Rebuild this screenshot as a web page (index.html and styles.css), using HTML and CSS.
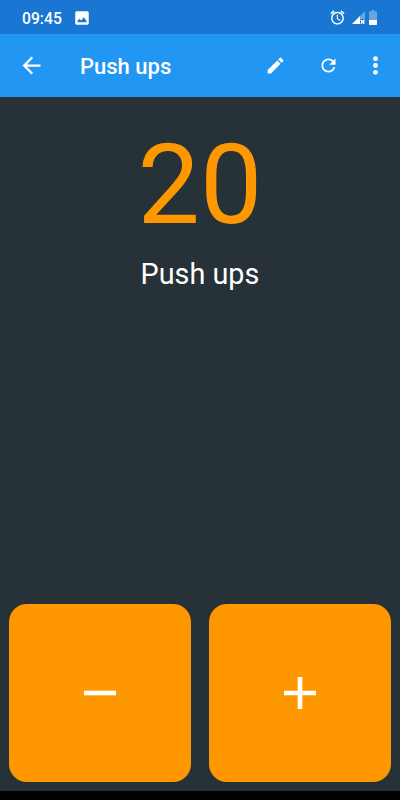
FILE: index.html
```
<!DOCTYPE html>
<html lang="en">

<head>
    <meta charset="UTF-8">
    <meta name="viewport" content="width=device-width, initial-scale=1.0">
    <title>Push ups</title>
    <link rel="stylesheet" href="styles.css">
</head>

<body>
    <div id="app">
        <div class="status-bar">
            <span class="clock">09:45</span>
            <svg class="picture-icon" viewBox="0 0 24 24"><path d="M21 19V5c0-1.100-.9-2-2-2H5c-1.100 0-2 .9-2 2v14c0 1.100.9 2 2 2h14c1.100 0 2-.9 2-2zM6 17.500v-2l2.700-2.500 2.300 2.300 3.300-4.300L18 15.500v2z"/></svg>
            <div class="status-icons">
                <svg class="alarm-icon" viewBox="0 0 24 24"><path d="M22 5.720l-4.600-3.860-1.290 1.530 4.600 3.860L22 5.720zM7.880 3.390L6.600 1.860 2 5.710l1.290 1.530 4.590-3.850zM12.500 8H11v6l4.750 2.850.75-1.230-4-2.370V8zM12 4c-4.970 0-9 4.030-9 9s4.020 9 9 9c4.970 0 9-4.030 9-9s-4.030-9-9-9zm0 16c-3.870 0-7-3.130-7-7s3.130-7 7-7 7 3.130 7 7-3.130 7-7 7z"/></svg>
                <svg class="signal-icon" viewBox="0 0 14 14">
                    <path opacity=".35" d="M13 0v8H8V5z"/>
                    <path d="M0 13L8 5v8z"/>
                    <path class="cross" d="M8.800 9l3.600 3.600M12.400 9L8.800 12.600"/>
                </svg>
                <svg class="battery-icon" viewBox="0 0 8 15">
                    <path opacity=".35" d="M2.500 0h3v1.500H7.300q.7 0 .7.700V10H0V2.200q0-.7.700-.7h1.800z"/>
                    <path d="M0 10h8v4.300q0 .7-.7.700H.7q-.7 0-.7-.7z"/>
                </svg>
            </div>
        </div>

        <div class="app-bar">
            <svg class="back-icon" viewBox="0 0 24 24"><path d="M20 11H7.830l5.590-5.590L12 4l-8 8 8 8 1.410-1.410L7.830 13H20v-2z"/></svg>
            <div class="title">Push ups</div>
            <svg class="edit-icon" viewBox="0 0 24 24"><path d="M3 17.250V21h3.750L17.810 9.940l-3.750-3.750L3 17.250zM20.710 7.040c.39-.39.39-1.020 0-1.410l-2.340-2.340c-.39-.39-1.020-.39-1.410 0l-1.830 1.830 3.750 3.750 1.830-1.830z"/></svg>
            <svg class="reset-icon" viewBox="0 0 24 24"><path d="M17.650 6.350C16.200 4.900 14.210 4 12 4c-4.420 0-7.990 3.580-7.990 8s3.570 8 7.990 8c3.730 0 6.840-2.550 7.730-6h-2.080c-.82 2.330-3.040 4-5.650 4-3.310 0-6-2.690-6-6s2.690-6 6-6c1.660 0 3.140.69 4.220 1.780L13 11h7V4l-2.350 2.350z"/></svg>
            <svg class="more-icon" viewBox="0 0 24 24"><circle cx="12" cy="5.900" r="2.200"/><circle cx="12" cy="12" r="2.200"/><circle cx="12" cy="18.100" r="2.200"/></svg>
        </div>

        <div class="counter">
            <div class="count">20</div>
            <div class="name">Push ups</div>
        </div>

        <div class="buttons">
            <button aria-label="Decrease">
                <svg viewBox="0 0 32 32"><path d="M0 16h32"/></svg>
            </button>
            <button aria-label="Increase">
                <svg viewBox="0 0 32 32"><path d="M0 16h32M16 0v32"/></svg>
            </button>
        </div>

        <div class="nav-bar"></div>
    </div>
</body>

</html>
```

FILE: styles.css
```
body,
html {
    margin: 0;
    padding: 0;
    font-family: Roboto, sans-serif;
    height: 100%;
    overflow: hidden;
}

#app {
    display: flex;
    flex-direction: column;
    height: 100%;
    background-color: #263238;
    color: white;
}

svg {
    display: block;
    flex: none;
    fill: white;
}

.status-bar {
    height: 34px;
    box-sizing: border-box;
    padding: 1px 22px 0;
    background-color: #1976d2;
    display: flex;
    align-items: center;
}

.clock {
    width: 51px;
    padding-top: 1px;
    font-size: 15.700px;
    font-weight: 500;
}

.picture-icon {
    width: 18px;
    height: 18px;
}

.status-icons {
    display: flex;
    align-items: center;
    margin-left: auto;
}

.alarm-icon {
    width: 17px;
    height: 17px;
    margin-right: 6px;
}

.signal-icon {
    width: 14px;
    height: 14px;
    margin-right: 3px;
}

.signal-icon .cross {
    fill: none;
    stroke: white;
    stroke-width: 1.5;
}

.battery-icon {
    width: 8px;
    height: 15px;
    margin-right: 1px;
}

.app-bar {
    height: 63px;
    box-sizing: border-box;
    padding: 0 11px 0 18px;
    background-color: #2196f3;
    display: flex;
    align-items: center;
}

.back-icon {
    width: 27px;
    height: 27px;
}

.title {
    flex-grow: 1;
    margin-left: 35px;
    padding-top: 2px;
    font-size: 22px;
    font-weight: 500;
}

.edit-icon {
    width: 21px;
    height: 21px;
    margin-right: 32px;
}

.reset-icon {
    width: 21px;
    height: 21px;
    margin-right: 23px;
}

.more-icon {
    width: 27px;
    height: 27px;
}

.counter {
    flex-grow: 1;
    padding-top: 22px;
    text-align: center;
}

.count {
    color: #ff9800;
    font-size: 111px;
    line-height: 132px;
}

.name {
    margin-top: 3px;
    font-size: 28.800px;
    line-height: 40px;
}

.buttons {
    display: grid;
    grid-template-columns: 1fr 1fr;
    gap: 18px;
    padding: 0 9px 9px;
}

button {
    display: flex;
    align-items: center;
    justify-content: center;
    height: 178px;
    padding: 0;
    border: none;
    border-radius: 18px;
    background-color: #ff9800;
    cursor: pointer;
}

button svg {
    width: 32px;
    height: 32px;
    stroke: white;
    stroke-width: 4.600;
}

.nav-bar {
    height: 9px;
    background-color: black;
}
```
